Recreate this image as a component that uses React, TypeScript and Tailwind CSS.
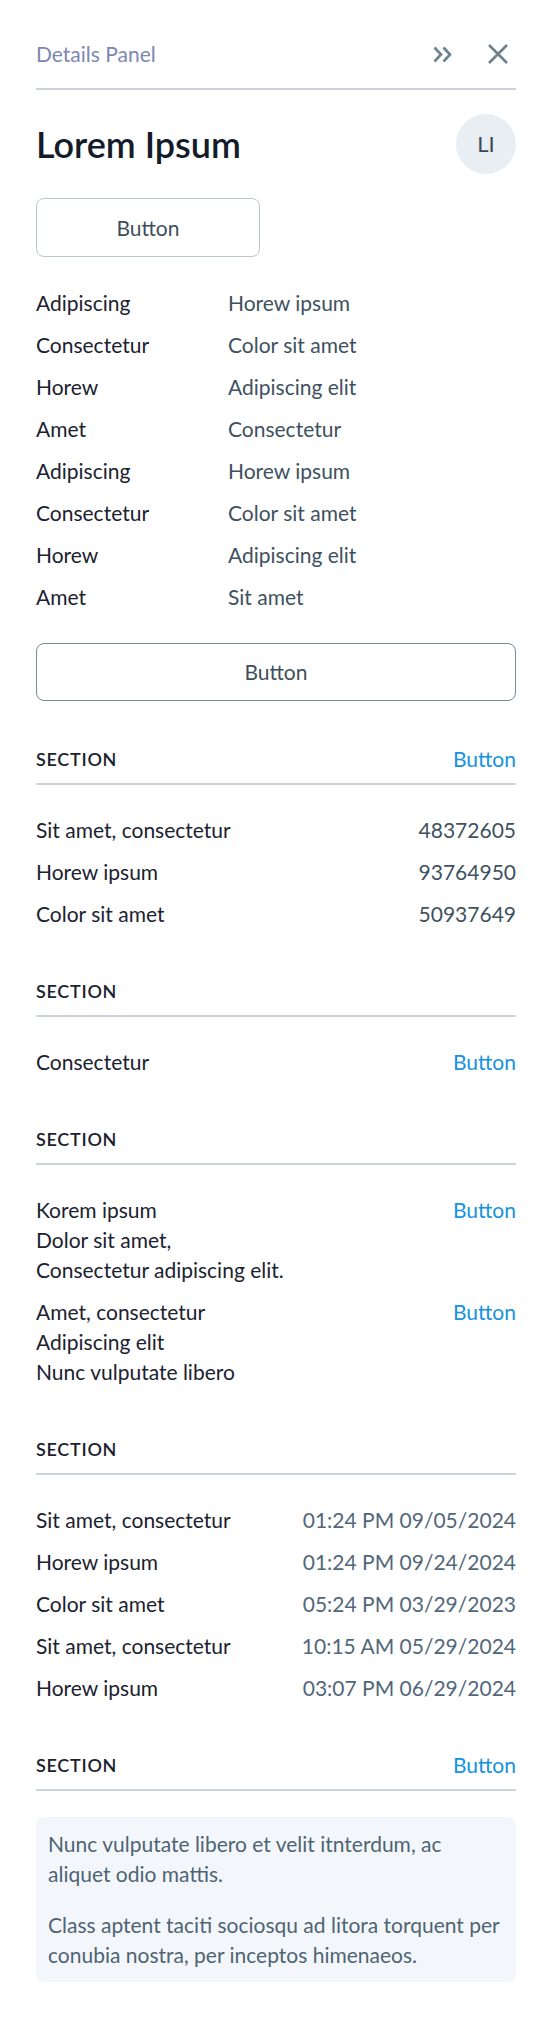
import React from 'react';

const kvRows: [string, string][] = [
  ['Adipiscing', 'Horew ipsum'],
  ['Consectetur', 'Color sit amet'],
  ['Horew', 'Adipiscing elit'],
  ['Amet', 'Consectetur'],
  ['Adipiscing', 'Horew ipsum'],
  ['Consectetur', 'Color sit amet'],
  ['Horew', 'Adipiscing elit'],
  ['Amet', 'Sit amet'],
];

const numberRows: [string, string][] = [
  ['Sit amet, consectetur', '48372605'],
  ['Horew ipsum', '93764950'],
  ['Color sit amet', '50937649'],
];

const dateRows: [string, string][] = [
  ['Sit amet, consectetur', '01:24 PM 09/05/2024'],
  ['Horew ipsum', '01:24 PM 09/24/2024'],
  ['Color sit amet', '05:24 PM 03/29/2023'],
  ['Sit amet, consectetur', '10:15 AM 05/29/2024'],
  ['Horew ipsum', '03:07 PM 06/29/2024'],
];

function Divider() {
  return <div className="h-[2px] bg-[#cbd3d9]" />;
}

function Section({ title, action, top = 47, gap = 30, children }: { title: string; action?: string; top?: number; gap?: number; children: React.ReactNode }) {
  return (
    <section style={{ marginTop: top }}>
      <div className="h-[30px] flex items-center justify-between">
        <span className="text-[18px] font-semibold tracking-[0.04em] text-[#1b2230]">{title}</span>
        {action && <button className="text-[21px] text-[#1592e0] leading-[30px]">{action}</button>}
      </div>
      <div className="mt-[9px]">
        <Divider />
      </div>
      <div style={{ marginTop: gap }}>{children}</div>
    </section>
  );
}

function PairList({ rows, valueClass }: { rows: [string, string][]; valueClass: string }) {
  return (
    <div className="flex flex-col gap-[12px]">
      {rows.map(([k, v], i) => (
        <div key={i} className="h-[30px] flex items-center justify-between">
          <span className="text-[#1b2230]">{k}</span>
          <span className={valueClass}>{v}</span>
        </div>
      ))}
    </div>
  );
}

export default function App() {
  return (
    <div className="w-[552px] min-h-[2018px] bg-white px-9 pb-9 text-[21px] leading-[30px]" style={{ fontFamily: 'Lato, "Open Sans", sans-serif' }}>
      {/* Header */}
      <div className="pt-[32px] h-[76px] flex items-center justify-between">
        <span className="text-[#7c88b1]">Details Panel</span>
        <div className="flex items-center gap-[36px] pr-[8px] text-[#6d808d]">
          <svg width="19" height="17" viewBox="0 0 19 17" fill="none" stroke="currentColor" strokeWidth="2.6">
            <path d="M1.5 1.5 L8 8.5 L1.5 15.5" />
            <path d="M10.5 1.5 L17 8.5 L10.5 15.5" />
          </svg>
          <svg width="20" height="20" viewBox="0 0 20 20" fill="none" stroke="currentColor" strokeWidth="2.6">
            <path d="M1 1 L19 19 M19 1 L1 19" />
          </svg>
        </div>
      </div>
      <div className="mt-[12px]">
        <Divider />
      </div>

      {/* Title */}
      <div className="mt-[24px] h-[60px] flex items-center justify-between">
        <h1 className="text-[36px] font-semibold text-[#141b2b]">Lorem Ipsum</h1>
        <div className="w-[60px] h-[60px] rounded-full bg-[#e8eef2] flex items-center justify-center text-[22px] text-[#3a4b57]">LI</div>
      </div>

      <button className="mt-[24px] w-[224px] h-[59px] rounded-[8px] border-[1.5px] border-[#bcc7ce] text-[#3d4f5c]">Button</button>

      <div className="mt-[31px] flex flex-col gap-[12px]">
        {kvRows.map(([k, v], i) => (
          <div key={i} className="h-[30px] flex items-center">
            <span className="w-[192px] text-[#1b2230]">{k}</span>
            <span className="text-[#3e5160]">{v}</span>
          </div>
        ))}
      </div>

      <button className="mt-[31px] w-full h-[58px] rounded-[8px] border-[1.5px] border-[#7b8d99] text-[#3d4f5c]">Button</button>

      <Section title="SECTION" action="Button" top={43}>
        <PairList rows={numberRows} valueClass="text-[#3e5160]" />
      </Section>

      <Section title="SECTION">
        <div className="h-[30px] flex items-center justify-between">
          <span className="text-[#1b2230]">Consectetur</span>
          <button className="text-[#1592e0]">Button</button>
        </div>
      </Section>

      <Section title="SECTION">
        <div className="flex flex-col gap-[12px]">
          <div className="flex justify-between items-start">
            <div className="text-[#1b2230]">
              <div>Korem ipsum</div>
              <div>Dolor sit amet,</div>
              <div>Consectetur adipiscing elit.</div>
            </div>
            <button className="text-[#1592e0] leading-[30px]">Button</button>
          </div>
          <div className="flex justify-between items-start">
            <div className="text-[#1b2230]">
              <div>Amet, consectetur</div>
              <div>Adipiscing elit</div>
              <div>Nunc vulputate libero</div>
            </div>
            <button className="text-[#1592e0] leading-[30px]">Button</button>
          </div>
        </div>
      </Section>

      <Section title="SECTION">
        <PairList rows={dateRows} valueClass="text-[#52677a]" />
      </Section>

      <Section title="SECTION" action="Button" gap={26}>
        <div className="rounded-[8px] bg-[#f3f7fc] p-[12px] text-[#4f6472]">
          <p>Nunc vulputate libero et velit itnterdum, ac aliquet odio mattis.</p>
          <p className="mt-[21px]">Class aptent taciti sociosqu ad litora torquent per conubia nostra, per inceptos himenaeos.</p>
        </div>
      </Section>
    </div>
  );
}
